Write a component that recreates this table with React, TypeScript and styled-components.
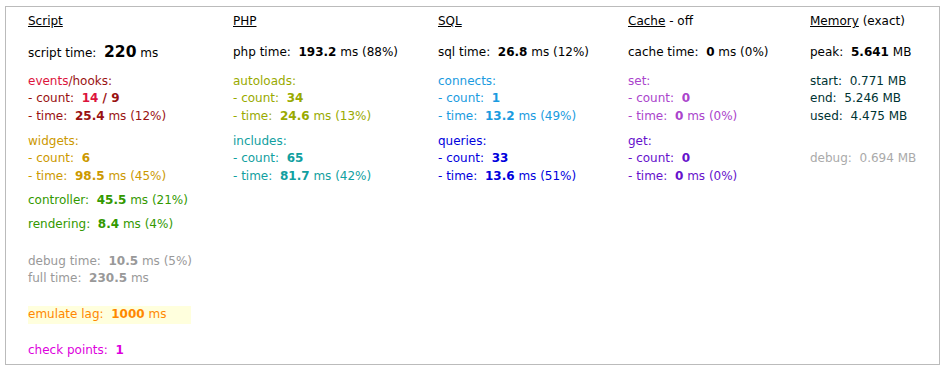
import React from 'react'
import styled, { createGlobalStyle } from 'styled-components'

const GlobalStyle = createGlobalStyle`
  html, body {
    margin: 0;
    padding: 0;
    background: #fff;
  }
  body {
    font-family: "DejaVu Sans", Verdana, sans-serif;
    font-size: 12px;
    color: #000;
  }
`

const Panel = styled.div`
  margin: 6px 0 0 5px;
  border: 1px solid #bbb;
  display: flex;
  padding-left: 22px;
  box-sizing: border-box;
  width: 935px;
  height: 359px;
`

const Column = styled.div<{ $w?: number }>`
  width: ${p => (p.$w ? `${p.$w}px` : 'auto')};
  flex: ${p => (p.$w ? 'none' : '1')};
  padding-top: 6px;
  line-height: 17.5px;
`

const Head = styled.div`
  height: 17.5px;
  margin-bottom: 13.5px;
  u {
    text-decoration: underline;
  }
`

const Main = styled.div`
  height: 17.5px;
  margin-bottom: 11px;
  white-space: nowrap;
`

const Big = styled.b`
  font-size: 15.5px;
`

const Group = styled.div<{ $c: string; $gap?: number }>`
  color: ${p => p.$c};
  margin-top: ${p => p.$gap ?? 0}px;
  white-space: nowrap;
`

const Line = styled.div<{ $c?: string }>`
  color: ${p => p.$c ?? 'inherit'};
`

const Lag = styled.div`
  display: inline-block;
  background: #ffffdd;
  padding-right: 25px;
`

const Dim = styled.span<{ $c: string }>`
  color: ${p => p.$c};
`

const sp = '\u00a0\u00a0'

const App = () => {
  return (
    <>
      <GlobalStyle />
      <Panel>
        <Column $w={205}>
          <Head><u>Script</u></Head>
          <Main>script time:{sp}<Big>220</Big> ms</Main>
          <Group $c="#991111">
            <Line><Dim $c="#dc143c">events</Dim>/hooks:</Line>
            <Line>- count:{sp}<b><Dim $c="#dc143c">14</Dim> / 9</b></Line>
            <Line>- time:{sp}<b>25.4</b> ms (12%)</Line>
          </Group>
          <Group $c="#cc9900" $gap={7.5}>
            <Line>widgets:</Line>
            <Line>- count:{sp}<b>6</b></Line>
            <Line>- time:{sp}<b>98.5</b> ms (45%)</Line>
          </Group>
          <Group $c="#339900" $gap={6.5}>
            <Line>controller:{sp}<b>45.5</b> ms (21%)</Line>
          </Group>
          <Group $c="#339900" $gap={6.5}>
            <Line>rendering:{sp}<b>8.4</b> ms (4%)</Line>
          </Group>
          <Group $c="#999" $gap={19.5}>
            <Line>debug time:{sp}<b>10.5</b> ms (5%)</Line>
            <Line>full time:{sp}<b>230.5</b> ms</Line>
          </Group>
          <Group $c="#ff8800" $gap={18.5}>
            <Lag>emulate lag:{sp}<b>1000</b> ms</Lag>
          </Group>
          <Group $c="#dd00dd" $gap={18.5}>
            <Line>check points:{sp}<b>1</b></Line>
          </Group>
        </Column>
        <Column $w={205}>
          <Head><u>PHP</u></Head>
          <Main>php time:{sp}<b>193.2</b> ms (88%)</Main>
          <Group $c="#99aa00">
            <Line>autoloads:</Line>
            <Line>- count:{sp}<b>34</b></Line>
            <Line>- time:{sp}<b>24.6</b> ms (13%)</Line>
          </Group>
          <Group $c="#11a0a0" $gap={7.5}>
            <Line>includes:</Line>
            <Line>- count:{sp}<b>65</b></Line>
            <Line>- time:{sp}<b>81.7</b> ms (42%)</Line>
          </Group>
        </Column>
        <Column $w={190}>
          <Head><u>SQL</u></Head>
          <Main>sql time:{sp}<b>26.8</b> ms (12%)</Main>
          <Group $c="#1a9be0">
            <Line>connects:</Line>
            <Line>- count:{sp}<b>1</b></Line>
            <Line>- time:{sp}<b>13.2</b> ms (49%)</Line>
          </Group>
          <Group $c="#0000dd" $gap={7.5}>
            <Line>queries:</Line>
            <Line>- count:{sp}<b>33</b></Line>
            <Line>- time:{sp}<b>13.6</b> ms (51%)</Line>
          </Group>
        </Column>
        <Column $w={182}>
          <Head><u>Cache</u> - off</Head>
          <Main>cache time:{sp}<b>0</b> ms (0%)</Main>
          <Group $c="#aa44cc">
            <Line>set:</Line>
            <Line>- count:{sp}<b>0</b></Line>
            <Line>- time:{sp}<b>0</b> ms (0%)</Line>
          </Group>
          <Group $c="#6611cc" $gap={7.5}>
            <Line>get:</Line>
            <Line>- count:{sp}<b>0</b></Line>
            <Line>- time:{sp}<b>0</b> ms (0%)</Line>
          </Group>
        </Column>
        <Column>
          <Head><u>Memory</u> (exact)</Head>
          <Main>peak:{sp}<b>5.641</b> MB</Main>
          <Group $c="#003333">
            <Line>start:{sp}0.771 MB</Line>
            <Line>end:{sp}5.246 MB</Line>
            <Line>used:{sp}4.475 MB</Line>
          </Group>
          <Group $c="#aaa" $gap={24.5}>
            <Line>debug:{sp}0.694 MB</Line>
          </Group>
        </Column>
      </Panel>
    </>
  )
}

export default App
